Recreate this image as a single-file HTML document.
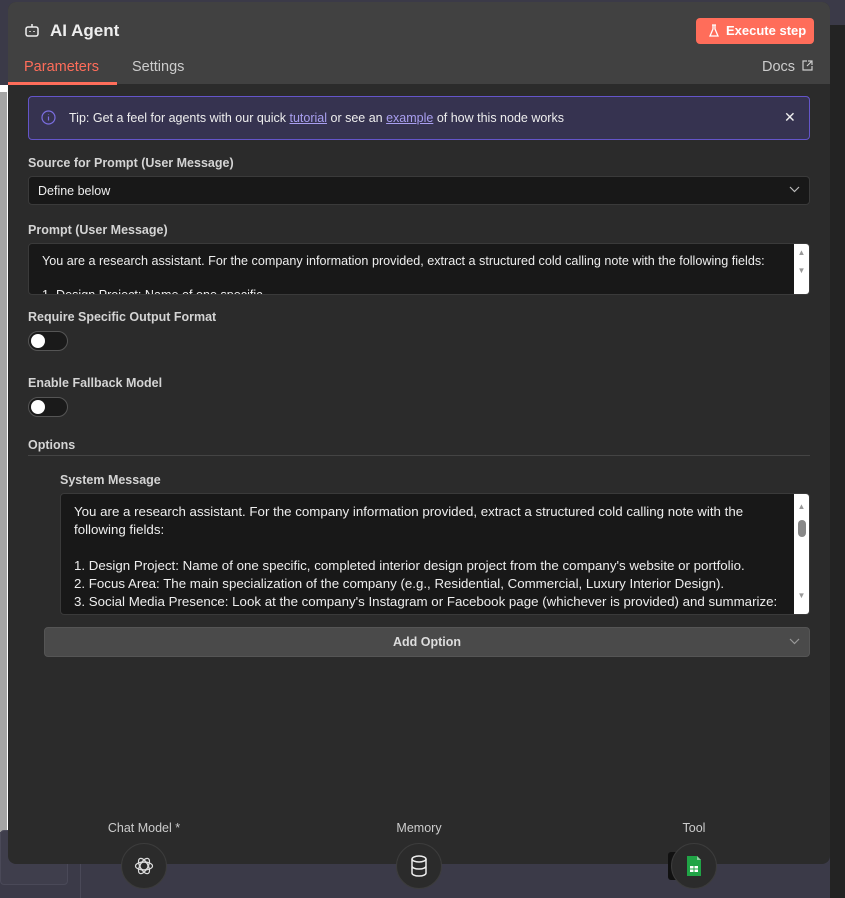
<!DOCTYPE html>
<html><head><style>
*{box-sizing:border-box;margin:0;padding:0}
body{width:845px;height:898px;overflow:hidden;background:#3b3a48;font-family:"Liberation Sans",sans-serif;position:relative;color:#ddd}
.abs{position:absolute}
.lbl{position:absolute;font-size:12.5px;font-weight:bold;color:#d4d4d4}
.ta{position:absolute;background:#181818;border:1px solid #3a3a3a;border-radius:4px;color:#eee;font-size:13px;overflow:hidden}
.sb{position:absolute;right:0;top:0;bottom:0;width:15px;background:#fff}
.tog{position:absolute;width:40px;height:20px;border-radius:10px;background:#1a1a1a;border:1px solid #555}
.tog:after{content:"";position:absolute;left:2px;top:2px;width:14px;height:14px;border-radius:50%;background:#fff}
.circ{position:absolute;width:46px;height:46px;border-radius:50%;background:#2b2b2b;border:1px solid #3c3c3c}
.cl{position:absolute;font-size:12.5px;color:#ccc;text-align:center;width:120px}
</style></head><body>
<div class="abs" style="left:830px;top:25px;width:15px;height:873px;background:#232323"></div>
<div class="abs" style="left:0;top:85px;width:8px;height:745px;background:#fff"></div>
<div class="abs" style="left:0;top:92px;width:7px;height:740px;background:#a5a5a5"></div>
<div class="abs" style="left:0;top:830px;width:68px;height:55px;background:#3f3e4c;border:1px solid #4a4958;border-radius:4px"></div>
<div class="abs" style="left:80px;top:830px;width:1px;height:68px;background:#4a4958"></div>
<div class="abs" style="left:8px;top:2px;width:822px;height:862px;background:#2b2b2b;border-radius:8px;overflow:hidden">
 <div class="abs" style="left:0;top:0;width:822px;height:82px;background:#414141"></div>
 <svg class="abs" style="left:16px;top:20px" width="16" height="16" viewBox="0 0 16 16" fill="none" stroke="#eee" stroke-width="1.5"><rect x="2" y="5" width="12" height="9" rx="2"/><path d="M8 5V2M6 9v1M10 9v1"/></svg>
 <div class="abs" style="left:42px;top:19px;font-size:17px;font-weight:bold;color:#eee">AI Agent</div>
 <div class="abs" style="left:688px;top:16px;width:118px;height:26px;background:#ff6d5a;border-radius:4px;color:#fff;font-size:13px;font-weight:bold;line-height:26px;padding-left:30px">Execute step</div>
 <svg class="abs" style="left:700px;top:22px" width="12" height="14" viewBox="0 0 12 14" fill="none" stroke="#fff" stroke-width="1.3"><path d="M4 1h4M5 1v4L2 12h8L7 5V1"/></svg>
 <div class="abs" style="left:16px;top:57px;font-size:14.5px;color:#ff6d5a">Parameters</div>
 <div class="abs" style="left:0;top:80px;width:109px;height:3px;background:#ff6d5a"></div>
 <div class="abs" style="left:124px;top:57px;font-size:14.5px;color:#ccc">Settings</div>
 <div class="abs" style="left:754px;top:57px;font-size:14.5px;color:#ccc">Docs</div>
 <svg class="abs" style="left:794px;top:58px" width="11" height="11" viewBox="0 0 11 11" fill="none" stroke="#ccc" stroke-width="1.2"><path d="M5 1H1v9h9V6M6 1h4v4M10 1L5 6"/></svg>
 <div class="abs" style="left:20px;top:94px;width:782px;height:44px;background:#363350;border:1px solid #6455c9;border-radius:4px"></div>
 <svg class="abs" style="left:33px;top:108px" width="15" height="15" viewBox="0 0 15 15" fill="none" stroke="#7b6ee0" stroke-width="1.2"><circle cx="7.5" cy="7.5" r="6.5"/><path d="M7.5 6.5v4M7.5 4.2v.6"/></svg>
 <div class="abs" style="left:61px;top:109px;font-size:12.5px;color:#eee">Tip: Get a feel for agents with our quick <span style="color:#a99ff0;text-decoration:underline">tutorial</span> or see an <span style="color:#a99ff0;text-decoration:underline">example</span> of how this node works</div>
 <div class="abs" style="left:776px;top:107px;font-size:14px;color:#eee">✕</div>
 <div class="lbl" style="left:20px;top:154px">Source for Prompt (User Message)</div>
 <div class="abs" style="left:20px;top:174px;width:782px;height:29px;background:#181818;border:1px solid #3a3a3a;border-radius:4px;font-size:12.5px;color:#eee;padding:7px 9px">Define below</div>
 <svg class="abs" style="left:781px;top:184px" width="11" height="7" viewBox="0 0 11 7" fill="none" stroke="#bbb" stroke-width="1.2"><path d="M1 1l4.5 4.5L10 1"/></svg>
 <div class="lbl" style="left:20px;top:221px">Prompt (User Message)</div>
 <div class="ta" style="left:20px;top:241px;width:782px;height:52px;padding:10px 13px;font-size:12.6px"><div>You are a research assistant. For the company information provided, extract a structured cold calling note with the following fields:</div><div style="margin-top:20px">1. Design Project: Name of one specific...</div><div class="sb"><div style="color:#999;font-size:8px;text-align:center;margin-top:4px">▲<br><br>▼</div></div></div>
 <div class="lbl" style="left:20px;top:308px">Require Specific Output Format</div>
 <div class="tog" style="left:20px;top:329px"></div>
 <div class="lbl" style="left:20px;top:374px">Enable Fallback Model</div>
 <div class="tog" style="left:20px;top:395px"></div>
 <div class="lbl" style="left:20px;top:436px">Options</div>
 <div class="abs" style="left:20px;top:453px;width:782px;height:1px;background:#444"></div>
 <div class="lbl" style="left:52px;top:471px">System Message</div>
 <div class="ta" style="left:52px;top:491px;width:750px;height:122px;padding:9px 28px 0 13px;line-height:18px;font-size:13.3px"><div>You are a research assistant. For the company information provided, extract a structured cold calling note with the following fields:</div><div style="margin-top:18px">1. Design Project: Name of one specific, completed interior design project from the company's website or portfolio.</div><div>2. Focus Area: The main specialization of the company (e.g., Residential, Commercial, Luxury Interior Design).</div><div>3. Social Media Presence: Look at the company's Instagram or Facebook page (whichever is provided) and summarize:</div><div>&nbsp;&nbsp;&nbsp;- Activity level...</div><div class="sb"><div style="color:#999;font-size:8px;text-align:center;margin-top:4px">▲</div><div style="margin:4px auto;width:8px;height:17px;border-radius:4px;background:#888"></div><div style="color:#999;font-size:8px;text-align:center;margin-top:50px">▼</div></div></div>
 <div class="abs" style="left:36px;top:625px;width:766px;height:30px;background:#4a4a4a;border:1px solid #555;border-radius:4px;text-align:center;font-size:12.5px;font-weight:bold;color:#ddd;line-height:28px">Add Option</div>
 <svg class="abs" style="left:781px;top:636px" width="11" height="7" viewBox="0 0 11 7" fill="none" stroke="#999" stroke-width="1.2"><path d="M1 1l4.5 4.5L10 1"/></svg>
</div>
<div class="cl" style="left:84px;top:821px">Chat Model *</div>
<div class="cl" style="left:359px;top:821px">Memory</div>
<div class="cl" style="left:634px;top:821px">Tool</div>
<div class="circ" style="left:121px;top:843px"></div>
<svg class="abs" style="left:133px;top:855px" width="22" height="22" viewBox="0 0 22 22" fill="none" stroke="#ddd" stroke-width="1.2"><circle cx="11" cy="11" r="4"/><ellipse cx="11" cy="11" rx="8.5" ry="4" transform="rotate(60 11 11)"/><ellipse cx="11" cy="11" rx="8.5" ry="4" transform="rotate(-60 11 11)"/><ellipse cx="11" cy="11" rx="8.5" ry="4"/></svg>
<div class="circ" style="left:396px;top:843px"></div>
<svg class="abs" style="left:410px;top:855px" width="18" height="22" viewBox="0 0 18 22" fill="none" stroke="#eee" stroke-width="1.5"><ellipse cx="9" cy="4" rx="7" ry="3"/><path d="M2 4v14c0 1.7 3 3 7 3s7-1.3 7-3V4M2 11c0 1.7 3 3 7 3s7-1.3 7-3"/></svg>
<div class="abs" style="left:668px;top:852px;width:12px;height:28px;background:#111;border-radius:3px"></div>
<div class="circ" style="left:671px;top:843px"></div>
<svg class="abs" style="left:686px;top:855px" width="16" height="22" viewBox="0 0 16 22"><path d="M1 1h10l4 4v16H1z" fill="#20a446"/><path d="M11 1v4h4" fill="#8ed1a0"/><rect x="4" y="11" width="8" height="6" fill="#fff"/><path d="M4 14h8M8 11v6" stroke="#20a446" stroke-width="1"/></svg>
</body></html>
